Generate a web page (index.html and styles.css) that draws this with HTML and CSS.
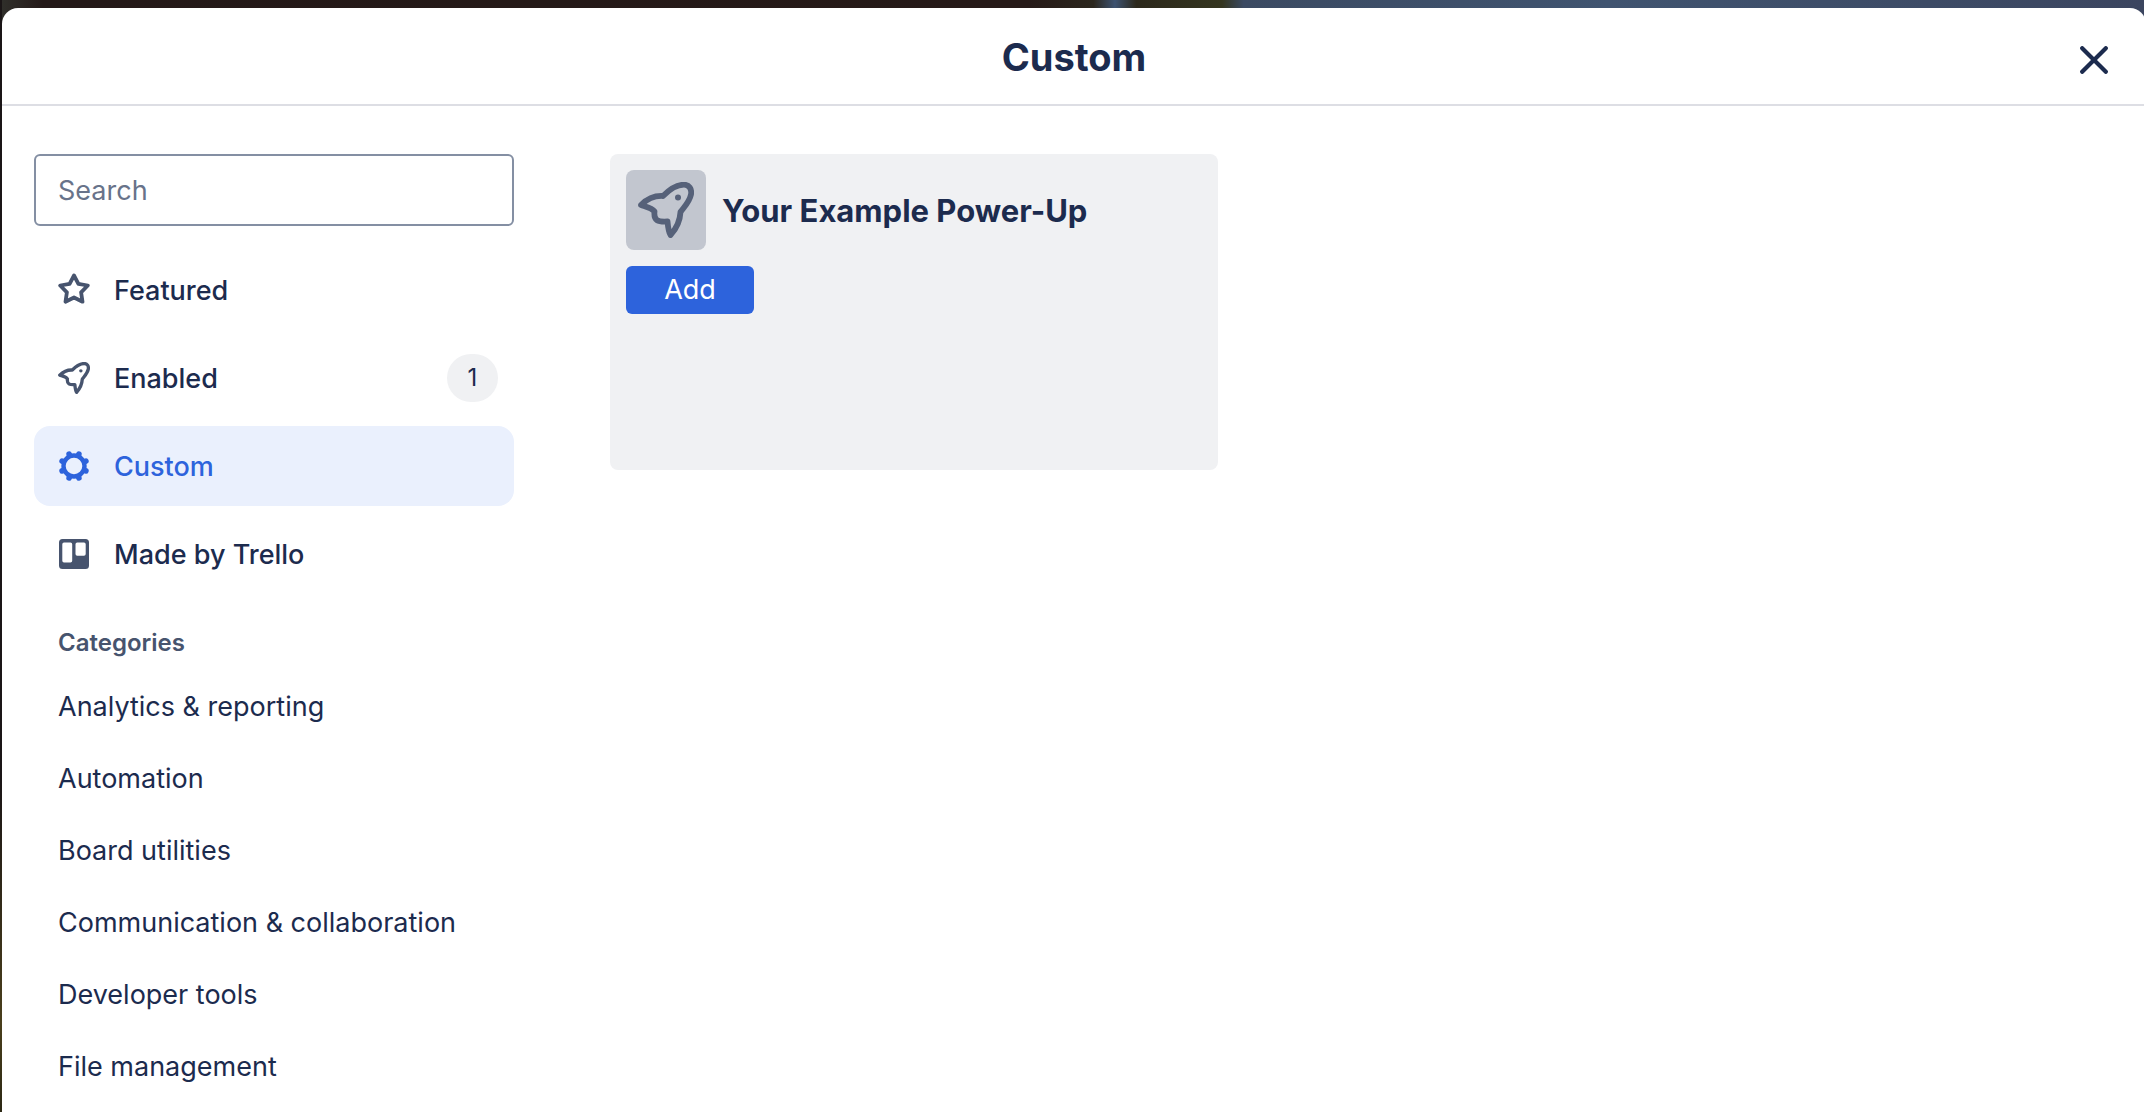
FILE: index.html
```html
<!DOCTYPE html>
<html lang="en">
<head>
  <meta charset="utf-8">
  <meta name="viewport" content="width=device-width, initial-scale=1">
  <title>Custom Power-Ups</title>
  <link rel="stylesheet" href="styles.css">
</head>
<body>
  <svg class="sprite" aria-hidden="true">
    <symbol id="rocket" viewBox="12 11 56 56">
      <path d="M15 34C21 28 28 24.500 37 25C43 19 51 13.700 58 13.700C63 13.700 66 18 65 23.500C63.500 31 58 36 54.500 41C54 51 50 58 44.500 64C42.500 61 42 56 41.500 50.500C32 51 27.500 50 28.500 40.500C26 37 21 36 15 34Z" fill="none" stroke="currentColor" stroke-width="5.800" stroke-linejoin="round"/>
      <circle cx="52" cy="26.500" r="3" fill="currentColor"/>
    </symbol>
  </svg>
  <div class="backdrop">
    <main class="dialog">
      <header class="dialog-header">
        <h1 class="dialog-title">Custom</h1>
        <button class="close" type="button" aria-label="Close">
          <svg width="28" height="28" viewBox="0 0 28 28" aria-hidden="true">
            <path d="M2.200 2.200L25.800 25.800M25.800 2.200L2.200 25.800" stroke="currentColor" stroke-width="4.200" stroke-linecap="round"/>
          </svg>
        </button>
      </header>
      <div class="dialog-body">
        <aside class="sidebar">
          <input class="search" type="search" placeholder="Search" aria-label="Search">
          <nav class="nav" aria-label="Power-Ups">
            <a class="nav-item" href="#featured">
              <svg class="nav-icon" viewBox="0 1 34 34" aria-hidden="true">
                <path d="M17 3.500L21.400 11.900L30.800 13.500L24.100 20.300L25.500 29.700L17 25.500L8.500 29.700L9.900 20.300L3.200 13.500L12.600 11.900Z" fill="none" stroke="currentColor" stroke-width="3.800" stroke-linejoin="round"/>
              </svg>
              <span class="nav-label">Featured</span>
            </a>
            <a class="nav-item" href="#enabled">
              <svg class="nav-icon" viewBox="-1 -1 34 34" aria-hidden="true"><use href="#rocket" width="32" height="32"/></svg>
              <span class="nav-label">Enabled</span>
              <span class="count">1</span>
            </a>
            <a class="nav-item nav-item-current" href="#custom" aria-current="page">
              <svg class="nav-icon" viewBox="-17 -17 34 34" aria-hidden="true">
                <circle r="10.500" fill="none" stroke="currentColor" stroke-width="4.400"/>
                <g stroke="currentColor" stroke-width="5.600" stroke-linecap="round">
                  <path d="M4.400 -10.600L4.900 -11.900M10.600 -4.400L11.900 -4.900M10.600 4.400L11.900 4.900M4.400 10.600L4.900 11.900M-4.400 10.600L-4.900 11.900M-10.600 4.400L-11.900 4.900M-10.600 -4.400L-11.900 -4.900M-4.400 -10.600L-4.900 -11.900"/>
                </g>
              </svg>
              <span class="nav-label">Custom</span>
            </a>
            <a class="nav-item" href="#made-by-trello">
              <svg class="nav-icon" viewBox="0 0 34 34" aria-hidden="true">
                <path fill="currentColor" fill-rule="evenodd" d="M5.500 2H28.500Q32 2 32 5.500V28.500Q32 32 28.500 32H5.500Q2 32 2 28.500V5.500Q2 2 5.500 2ZM7 5.500Q5.300 5.500 5.300 7.200V23.800Q5.300 25.500 7 25.500H13.500Q15.200 25.500 15.200 23.800V7.200Q15.200 5.500 13.500 5.500ZM20.200 5.500Q18.500 5.500 18.500 7.200V17Q18.500 18.700 20.200 18.700H27Q28.700 18.700 28.700 17V7.200Q28.700 5.500 27 5.500Z"/>
              </svg>
              <span class="nav-label">Made by Trello</span>
            </a>
          </nav>
          <h2 class="categories-title">Categories</h2>
          <nav class="categories" aria-label="Categories">
            <a class="category" href="#analytics">Analytics &amp; reporting</a>
            <a class="category" href="#automation">Automation</a>
            <a class="category" href="#board-utilities">Board utilities</a>
            <a class="category" href="#communication">Communication &amp; collaboration</a>
            <a class="category" href="#developer-tools">Developer tools</a>
            <a class="category" href="#file-management">File management</a>
          </nav>
        </aside>
        <section class="results" aria-label="Custom Power-Ups">
          <article class="card">
            <div class="card-heading">
              <span class="card-icon"><svg width="56" height="56" aria-hidden="true"><use href="#rocket"/></svg></span>
              <h3 class="card-title">Your Example Power-Up</h3>
            </div>
            <button class="add" type="button">Add</button>
          </article>
        </section>
      </div>
    </main>
  </div>
</body>
</html>
```
FILE: styles.css
```css
:root {
  --text: #1c2b4e;
  --muted: #47546e;
  --blue: #2d63dc;
}

* {
  box-sizing: border-box;
}

body {
  margin: 0;
  color: var(--text);
  font: 400 27px/40px Inter, "Liberation Sans", sans-serif;
}

h1,
h2,
h3 {
  margin: 0;
}

a {
  color: inherit;
  text-decoration: none;
}

button {
  border: 0;
  font: inherit;
  cursor: pointer;
}

.sprite {
  display: none;
}

/* Board background, visible around the dialog */
.backdrop {
  display: flex;
  min-height: 100vh;
  padding: 8px 0 0 2px;
  overflow: hidden;
  background:
    linear-gradient(#1a1516 0 70%, #4a3f1c 92%, #2c2814) left / 2px 100% no-repeat,
    linear-gradient(90deg, #30302b, #241918 2%, #261a18 48%, #2b261d 51%, #3d5270 52%, #2c281c 53%, #34351f 57%, #3b4a62 58%, #405470 75%, #3b455f);
}

.dialog {
  flex: 1;
  margin-right: -2px;
  border-radius: 16px 16px 0 0;
  background: #fff;
}

.dialog-header {
  display: grid;
  grid-template-columns: 1fr auto 1fr;
  align-items: center;
  padding: 20px 28px;
  border-bottom: 2px solid #dddee4;
}

.dialog-title {
  grid-column: 2;
  padding-top: 2px;
  font-size: 38px;
  font-weight: 700;
  line-height: 54px;
}

.close {
  display: grid;
  place-items: center;
  justify-self: end;
  width: 48px;
  height: 48px;
  margin-top: 8px;
  padding: 0;
  color: inherit;
  background: none;
}

.dialog-body {
  display: flex;
  gap: 96px;
  padding: 48px 32px 0;
}

.sidebar {
  flex: 0 0 480px;
}

.search {
  display: block;
  width: 100%;
  height: 72px;
  margin-bottom: 24px;
  padding: 0 22px;
  border: 2px solid #848fa3;
  border-radius: 6px;
  color: inherit;
  background: #fff;
  font: inherit;
}

.search::placeholder {
  color: #68738a;
  opacity: 1;
}

.nav {
  display: grid;
  gap: 8px;
}

.nav-item {
  display: flex;
  align-items: center;
  height: 80px;
  padding: 0 16px 0 23px;
  border-radius: 16px;
  font-weight: 500;
}

.nav-item-current {
  color: var(--blue);
  background: #eaf0fd;
}

.nav-icon {
  width: 34px;
  height: 34px;
  margin-right: 23px;
  color: var(--muted);
}

.nav-item-current .nav-icon {
  color: inherit;
}

.nav-label {
  padding-top: 2px;
}

.count {
  min-width: 51px;
  margin-left: auto;
  border-radius: 24px;
  background: #f0f1f3;
  font-size: 24px;
  font-weight: 400;
  line-height: 48px;
  text-align: center;
}

.categories-title {
  padding: 33px 24px 12px;
  color: var(--muted);
  font-size: 24px;
  font-weight: 600;
  line-height: 32px;
}

.categories {
  display: grid;
}

.category {
  padding: 16px 24px;
}

.results {
  display: grid;
  flex: 1;
  grid-template-columns: repeat(auto-fill, 608px);
  align-items: start;
}

.card {
  min-height: 316px;
  padding: 16px;
  border-radius: 8px;
  background: #f0f1f3;
}

.card-heading {
  display: flex;
  gap: 16px;
  align-items: center;
  margin-bottom: 16px;
}

.card-icon {
  display: grid;
  place-items: center;
  width: 80px;
  height: 80px;
  border-radius: 8px;
  color: #566179;
  background: #c2c6cf;
}

.card-title {
  padding-top: 2px;
  font-size: 31px;
  font-weight: 700;
  line-height: 40px;
}

.add {
  min-width: 128px;
  padding: 4px 24px;
  border-radius: 6px;
  color: #fff;
  background: var(--blue);
}
```
